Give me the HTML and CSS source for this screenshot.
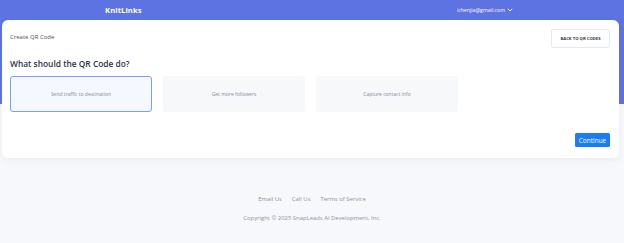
FILE: index.html
```html
<!DOCTYPE html>
<html>
<head>
<meta charset="utf-8">
<link rel="stylesheet" href="styles.css">
</head>
<body>
<div class="page">
  <header class="topbar">
    <div class="brand">KnitLinks</div>
    <div class="user">ichenjia@gmail.com
      <svg class="chev" width="6" height="4" viewBox="0 0 6 4"><path d="M0.8 0.8 L3 3 L5.2 0.8" fill="none" stroke="#fff" stroke-width="0.9"/></svg>
    </div>
  </header>
  <main class="card">
    <div class="card-head">
      <div class="crumb">Create QR Code</div>
      <button class="back">BACK TO QR CODES</button>
    </div>
    <h1 class="question">What should the QR Code do?</h1>
    <div class="options">
      <div class="opt selected">Send traffic to destination</div>
      <div class="opt">Get more followers</div>
      <div class="opt">Capture contact info</div>
    </div>
    <div class="actions">
      <button class="continue">Continue</button>
    </div>
  </main>
  <footer class="footer">
    <nav class="links">
      <a>Email Us</a>
      <a>Call Us</a>
      <a>Terms of Service</a>
    </nav>
    <div class="copy">Copyright © 2025 SnapLeads AI Development, Inc.</div>
  </footer>
</div>
</body>
</html>
```

FILE: styles.css
```css
html, body {
  margin: 0;
  padding: 0;
}
body {
  font-family: "Open Sans", "Noto Sans", sans-serif;
  background: #f7f8fb;
}
.page {
  width: 624px;
  height: 243px;
  background: linear-gradient(#5c73e1 0, #5c73e1 104px, #f7f8fb 104px);
  overflow: hidden;
}
.topbar {
  height: 20px;
  display: flex;
  align-items: center;
  justify-content: space-between;
  padding: 0 111px 0 105px;
  color: #fff;
}
.brand {
  font-weight: 700;
  font-size: 7.6px;
  letter-spacing: 0.1px;
}
.user {
  font-size: 5.2px;
  display: flex;
  align-items: center;
  gap: 2px;
}
.card {
  margin: 0 5px 0 2px;
  height: 138px;
  box-sizing: border-box;
  background: #fff;
  border-radius: 6px;
  padding: 9px 9px 11px 8px;
  display: flex;
  flex-direction: column;
  box-shadow: 0 2px 6px rgba(40, 50, 90, 0.06);
}
.card-head {
  display: flex;
  justify-content: space-between;
  align-items: center;
  height: 19px;
}
.crumb {
  font-size: 6px;
  color: #4a5264;
  margin-top: -3px;
}
.back {
  width: 59px;
  height: 19px;
  background: #fff;
  border: 1px solid #e6e9ef;
  border-radius: 2px;
  font-family: inherit;
  font-size: 4.2px;
  font-weight: 700;
  color: #2f3644;
  padding: 0;
}
.question {
  margin: 9px 0 0 0;
  font-size: 8.4px;
  font-weight: 600;
  color: #2b3348;
  line-height: 13px;
}
.options {
  display: flex;
  gap: 11px;
  margin-top: 6px;
}
.opt {
  width: 142px;
  height: 36px;
  box-sizing: border-box;
  border-radius: 3px;
  background: #f7f8fa;
  display: flex;
  align-items: center;
  justify-content: center;
  font-size: 5px;
  color: #858c9b;
}
.opt.selected {
  background: #f5f8fe;
  border: 1px solid #72a3f7;
}
.actions {
  margin-top: auto;
  display: flex;
  justify-content: flex-end;
}
.continue {
  width: 35px;
  height: 14px;
  background: #1a7df6;
  color: #fff;
  border: none;
  border-radius: 1.5px;
  font-family: inherit;
  font-size: 6.5px;
  padding: 0;
}
.footer {
  display: flex;
  flex-direction: column;
  align-items: center;
  color: #8a93a6;
  font-size: 5.9px;
}
.links {
  margin-top: 37px;
  display: flex;
  gap: 10px;
}
.copy {
  margin-top: 11px;
}
```
